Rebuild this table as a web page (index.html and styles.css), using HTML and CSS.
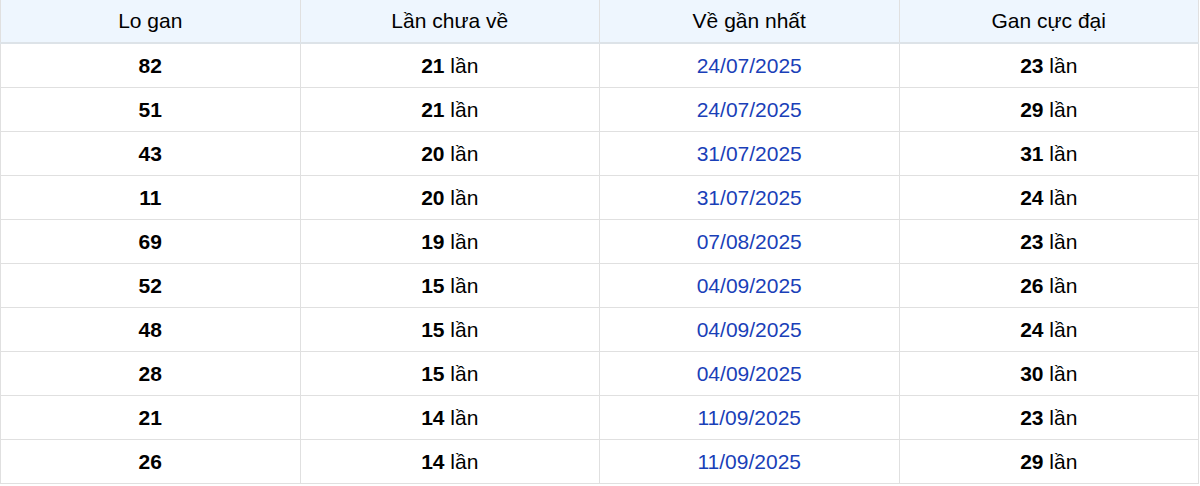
FILE: index.html
```html
<!DOCTYPE html>
<html>
<head>
<meta charset="utf-8">
<link rel="stylesheet" href="styles.css">
</head>
<body>
<table class="gan">
<thead>
<tr><th>Lo gan</th><th>Lần chưa về</th><th>Về gần nhất</th><th>Gan cực đại</th></tr>
</thead>
<tbody>
<tr><td><b>82</b></td><td><b>21</b> lần</td><td class="date">24/07/2025</td><td><b>23</b> lần</td></tr>
<tr><td><b>51</b></td><td><b>21</b> lần</td><td class="date">24/07/2025</td><td><b>29</b> lần</td></tr>
<tr><td><b>43</b></td><td><b>20</b> lần</td><td class="date">31/07/2025</td><td><b>31</b> lần</td></tr>
<tr><td><b>11</b></td><td><b>20</b> lần</td><td class="date">31/07/2025</td><td><b>24</b> lần</td></tr>
<tr><td><b>69</b></td><td><b>19</b> lần</td><td class="date">07/08/2025</td><td><b>23</b> lần</td></tr>
<tr><td><b>52</b></td><td><b>15</b> lần</td><td class="date">04/09/2025</td><td><b>26</b> lần</td></tr>
<tr><td><b>48</b></td><td><b>15</b> lần</td><td class="date">04/09/2025</td><td><b>24</b> lần</td></tr>
<tr><td><b>28</b></td><td><b>15</b> lần</td><td class="date">04/09/2025</td><td><b>30</b> lần</td></tr>
<tr><td><b>21</b></td><td><b>14</b> lần</td><td class="date">11/09/2025</td><td><b>23</b> lần</td></tr>
<tr><td><b>26</b></td><td><b>14</b> lần</td><td class="date">11/09/2025</td><td><b>29</b> lần</td></tr>
</tbody>
</table>
</body>
</html>
```
FILE: styles.css
```css
html, body {
  margin: 0;
  padding: 0;
  background: #fff;
}
body {
  font-family: "Liberation Sans", Arial, sans-serif;
  font-size: 21px;
  color: #000;
}
.gan {
  width: 1199px;
  border-collapse: collapse;
  table-layout: fixed;
}
.gan th, .gan td {
  border: 1px solid #e0e0e0;
  text-align: center;
  padding: 0;
  height: 43px;
}
.gan th {
  background: #eef6fe;
  font-weight: normal;
  height: 42px;
  border-top: none;
  border-bottom: 2px solid #dde3e8;
}
.gan b {
  font-weight: bold;
}
.gan .date {
  color: #1a3fb8;
}
```
